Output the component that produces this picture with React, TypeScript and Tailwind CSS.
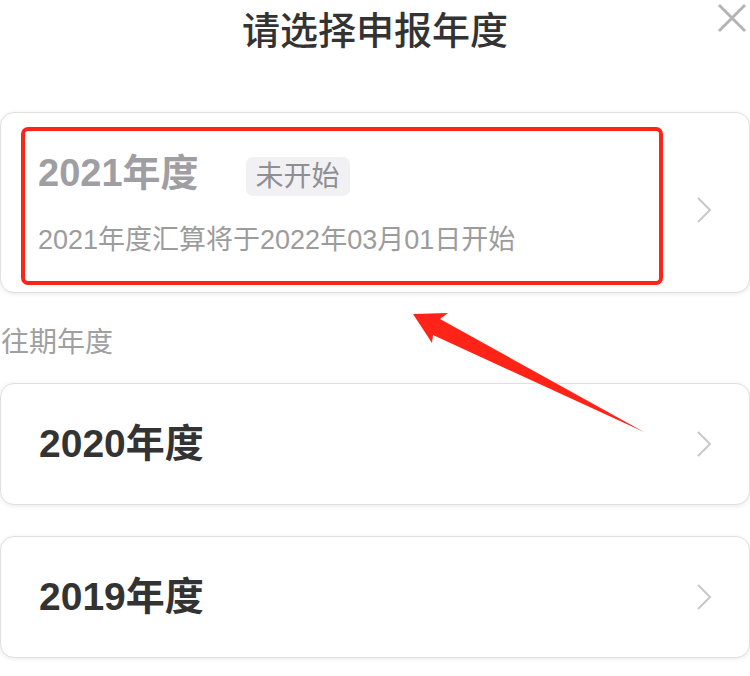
const font = { fontFamily: '"Liberation Sans", "Noto Sans CJK SC", sans-serif' };

function Chevron() {
  return (
    <svg width="16" height="28" viewBox="0 0 16 28" className="shrink-0">
      <polyline points="2,2 14,14 2,26" fill="none" stroke="#c8c8cc" strokeWidth="2" />
    </svg>
  );
}

function YearCard({ year, className = "" }: { year: string; className?: string }) {
  return (
    <div
      className={`flex h-[122px] items-center justify-between rounded-[14px] border border-[#e0e0e0] bg-white pl-[38px] pr-[37px] shadow-[0_1px_5px_rgba(0,0,0,0.09)] ${className}`}
    >
      <span className="text-[39px] leading-[44px] font-bold text-[#333333]">{year}年度</span>
      <Chevron />
    </div>
  );
}

export default function App() {
  return (
    <div className="relative h-[676px] w-[750px] overflow-hidden bg-white" style={font}>
      {/* 标题栏 */}
      <div className="grid h-[62px] grid-cols-[1fr_auto_1fr]">
        <div />
        <h1 className="self-center text-[38px] leading-none font-medium text-[#333333]">请选择申报年度</h1>
        <div className="flex items-start justify-end pt-[3px] pr-[3px]">
          <svg width="30" height="30" viewBox="0 0 30 30">
            <path d="M2 2 L28 28 M28 2 L2 28" stroke="#b4b4b4" strokeWidth="3" />
          </svg>
        </div>
      </div>

      {/* 当前年度 */}
      <div className="mt-[50px] flex h-[181px] items-start justify-between rounded-[14px] border border-[#e0e0e0] bg-white pt-[14px] pl-[20px] pr-[37px] shadow-[0_1px_5px_rgba(0,0,0,0.09)]">
        <div className="h-[158px] w-[642px] rounded-[7px] border-4 border-[#ff2318] pt-[18px] pl-[13px]">
          <div className="flex items-center">
            <span className="text-[38px] leading-[44px] font-bold text-[#9e9ea3]">2021年度</span>
            <span className="mt-[8px] ml-[47px] rounded-[7px] bg-[#f1f1f3] px-[10px] text-[28px] leading-[39px] text-[#8e8e93]">
              未开始
            </span>
          </div>
          <p className="mt-[28px] text-[27px] leading-[32px] text-[#9c9c9c]">2021年度汇算将于2022年03月01日开始</p>
        </div>
        <div className="self-center">
          <Chevron />
        </div>
      </div>

      {/* 往期年度 */}
      <p className="mt-[36px] pl-px text-[28px] leading-[28px] text-[#a0a0a0]">往期年度</p>
      <YearCard year="2020" className="mt-[26px]" />
      <YearCard year="2019" className="mt-[31px]" />

      {/* 标注箭头 */}
      <svg className="pointer-events-none absolute inset-0" width="750" height="676" viewBox="0 0 750 676">
        <polygon points="413,314 448,313 440,319 644,432 433,335 432,343" fill="#ff2318" />
      </svg>
    </div>
  );
}
